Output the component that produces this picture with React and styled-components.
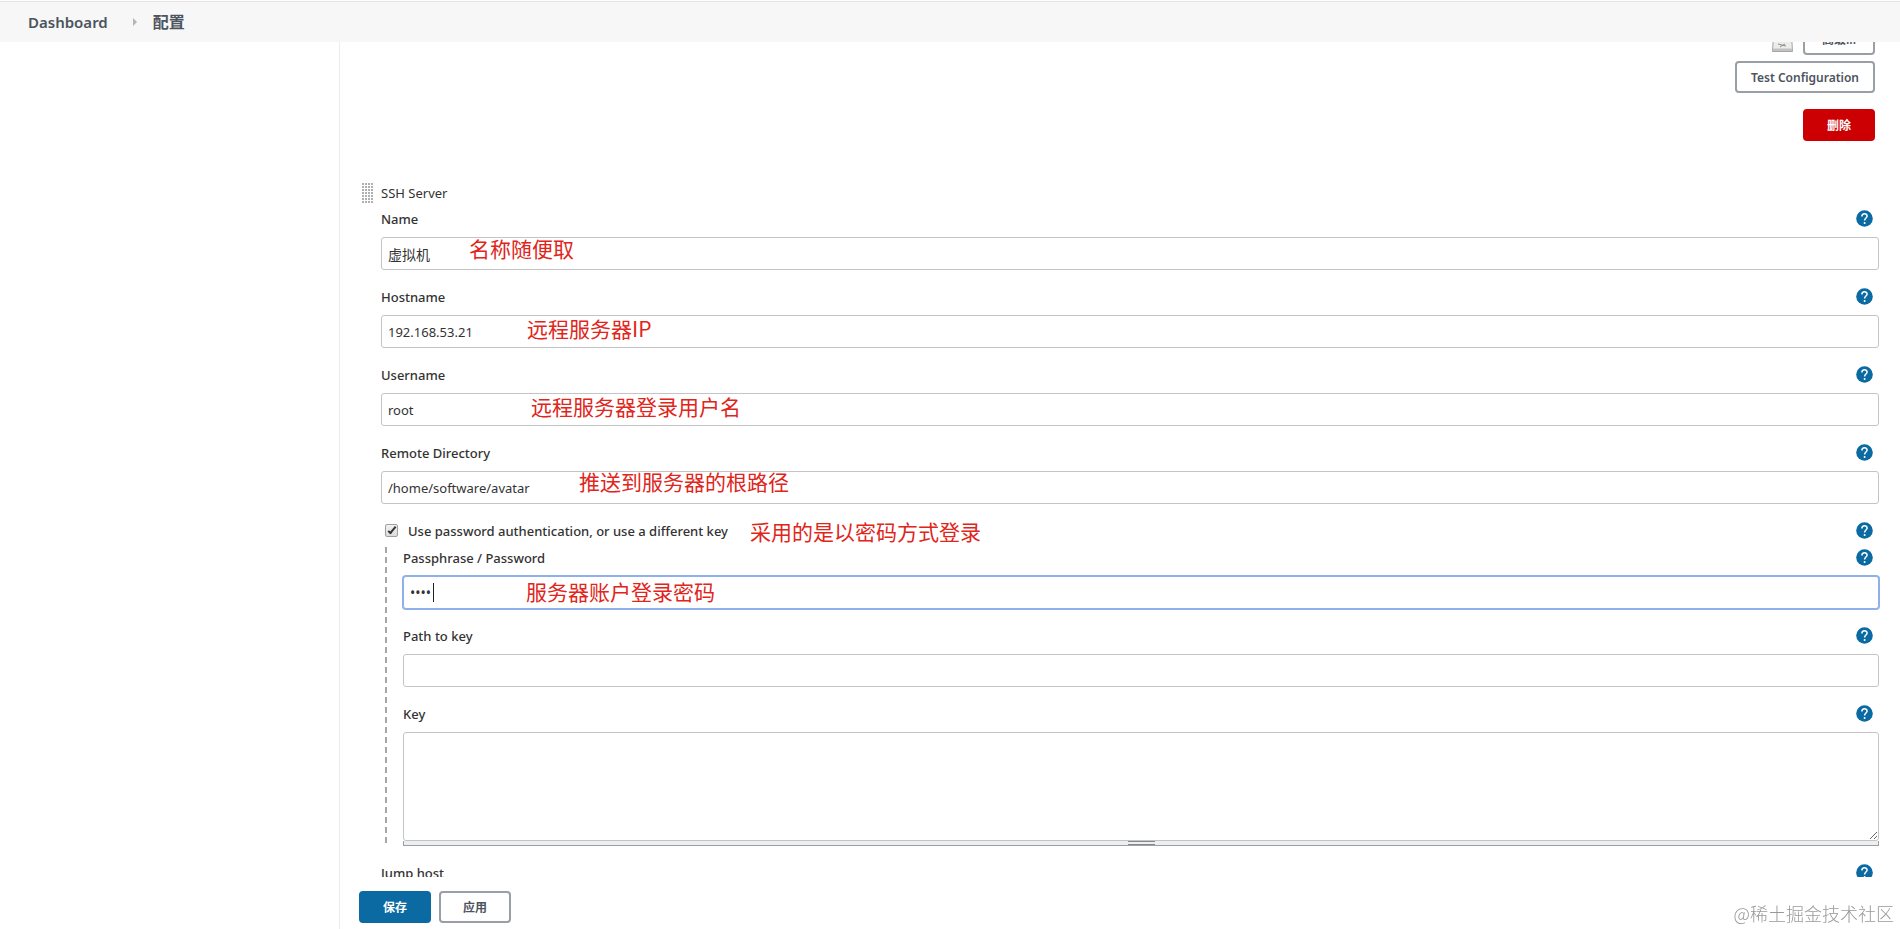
import React from "react";
import styled, { createGlobalStyle, css } from "styled-components";

const GlobalStyle = createGlobalStyle`
  *, *::before, *::after { box-sizing: border-box; }
  body {
    margin: 0;
    background: #fff;
    color: #333;
    font-family: "Noto Sans", "Noto Sans CJK SC", sans-serif;
    font-size: 13px;
    overflow: hidden;
  }
  button, input, textarea { font-family: inherit; font-size: inherit; color: inherit; }
`;

const Page = styled.div`
  display: flex;
  flex-direction: column;
  height: 100vh;
`;

const Breadcrumbs = styled.nav`
  position: relative;
  z-index: 1;
  flex: none;
  display: flex;
  align-items: center;
  gap: 16px;
  height: 42px;
  padding: 2px 28px 0;
  background: #f7f7f7;
  box-shadow: inset 0 1px #fdfdfd, inset 0 2px #e6e6e6;
  font-weight: 600;
`;

const Crumb = styled.a`
  color: #4d545d;
  font-size: ${(p) => (p.$current ? 16 : 15)}px;
  line-height: 20px;
  text-decoration: none;
`;

const CrumbArrow = styled.span`
  margin: 0 0 0 9px;
  border: solid transparent;
  border-width: 4px 0 4px 4px;
  border-left-color: #b5b5b5;
`;

const Body = styled.div`
  display: flex;
  flex: 1;
  min-height: 0;
`;

const SidePanel = styled.aside`
  flex: none;
  width: 340px;
  border-right: 1px solid #ececec;
`;

const Main = styled.main`
  flex: 1;
  min-width: 0;
  display: flex;
  flex-direction: column;
`;

const ScrollPane = styled.div`
  flex: 1;
  min-height: 0;
  overflow: hidden;
`;

const Form = styled.form`
  margin-top: -19px;
  padding: 0 21px 0 41px;
`;

const ActionStack = styled.div`
  display: flex;
  flex-direction: column;
  align-items: flex-end;
  padding-right: 4px;
  margin-bottom: 40px;
`;

const ActionRow = styled.div`
  display: flex;
  align-items: center;
  gap: 10px;
  margin-bottom: ${(p) => p.$gap || 0}px;
`;

const variants = {
  plain: css`background: #fff; border-color: #9a9fa6; color: #4d545d;`,
  primary: css`background: #0b6aa2; border-color: #0b6aa2; color: #fff;`,
  danger: css`background: #cc0003; border-color: #cc0003; color: #fff;`,
};

const Button = styled.button`
  height: 32px;
  min-width: 72px;
  padding: 2px 14px 0;
  border: 2px solid;
  border-radius: 4px;
  font-size: 12px;
  font-weight: 600;
  line-height: 16px;
  ${(p) => variants[p.$variant || "plain"]}
`;

const SectionHead = styled.div`
  display: flex;
  align-items: center;
  gap: 8px;
  height: 24px;
  margin: 0 0 2px -19px;
`;

const DragHandle = styled.span`
  width: 11px;
  height: 20px;
  background: radial-gradient(circle at 1px 1px, #b0b0b0 1px, transparent 1px) 0 0 / 3px 3px;
`;

const FieldBox = styled.div`
  position: relative;
  margin-bottom: 15px;
`;

const LabelRow = styled.div`
  position: relative;
  display: flex;
  align-items: center;
  justify-content: space-between;
  height: 24px;
  padding-right: 6px;
  margin-bottom: ${(p) => p.$gap ?? 6}px;
`;

const Label = styled.label`
  display: flex;
  align-items: center;
  gap: 10px;
  font-size: 13px;
  font-weight: 500;
  line-height: 20px;
`;

const HelpLink = styled.a`
  display: block;
  width: 17px;
  height: 17px;
  margin-bottom: 2px;
  svg { display: block; }
`;

const Input = styled.input`
  display: block;
  width: 100%;
  height: 33px;
  padding: 0 6px;
  border: 1px solid #c4c4c4;
  border-radius: 3px;
  background: #fff;
  outline: none;
  font-size: ${(p) => (p.$large ? 14 : 13)}px;
  ${(p) => p.$active && css`border-color: #8fb0ea; box-shadow: 0 0 0 1px #8fb0ea;`}
`;

const Caret = styled.span`
  position: absolute;
  left: 30px;
  bottom: 7px;
  width: 1px;
  height: 19px;
  background: #222;
`;

const KeyArea = styled.textarea`
  display: block;
  width: 100%;
  height: 109px;
  padding: 6px;
  border: 1px solid #c4c4c4;
  border-radius: 3px;
  resize: vertical;
  outline: none;
`;

const ResizeBar = styled.div`
  display: flex;
  justify-content: center;
  height: 5px;
  background: #eceeef;
  border: 1px solid #9a9fa6;
  border-top: 0;
  &::after {
    content: "";
    width: 27px;
    height: 4px;
    border: solid #888;
    border-width: 1px 0;
  }
`;

const Checkbox = styled.input`
  appearance: none;
  position: relative;
  width: 13px;
  height: 13px;
  margin: 0 0 2px 4px;
  border: 1px solid #a0a0a0;
  border-radius: 2px;
  background: linear-gradient(#f2f2f2, #dcdcdc);
  &:checked::after {
    content: "";
    position: absolute;
    left: 4px;
    top: 0;
    width: 4px;
    height: 9px;
    border: solid #333;
    border-width: 0 2px 2px 0;
    transform: rotate(40deg);
  }
`;

const Nested = styled.fieldset`
  min-width: 0;
  margin: 0 0 15px 4px;
  padding: 0 0 0 18px;
  border: 0;
  background: repeating-linear-gradient(#a6a6a6 0 6px, transparent 6px 10px) 0 1px / 2px 100% no-repeat;
`;

const Note = styled.span`
  position: absolute;
  left: ${(p) => p.$x}px;
  top: ${(p) => p.$y}px;
  color: #e0251b;
  font-family: "Noto Sans CJK SC", sans-serif;
  font-size: 21px;
  font-weight: 400;
  line-height: 24px;
  white-space: nowrap;
  pointer-events: none;
`;

const SaveBar = styled.div`
  flex: none;
  display: flex;
  gap: 8px;
  padding: 14px 19px 6px;
`;

const Watermark = styled.span`
  position: fixed;
  right: 6px;
  bottom: 4px;
  color: #999;
  font-family: "Noto Sans CJK SC", sans-serif;
  font-size: 18px;
  font-weight: 300;
  line-height: 24px;
`;

function Help({ topic }) {
  return (
    <HelpLink href="#help" aria-label={`Help: ${topic}`}>
      <svg width="17" height="17" viewBox="0 0 17 17">
        <circle cx="8.5" cy="8.5" r="8.3" fill="#0b6aa2" />
        <path d="M5.9 6.5C5.9 2.9 11.1 2.9 11.1 6.1C11.1 8.1 8.6 8 8.6 10.4" fill="none" stroke="#fff" strokeWidth="1.5" />
        <circle cx="8.6" cy="13" r="1" fill="#fff" />
      </svg>
    </HelpLink>
  );
}

function NotepadIcon() {
  return (
    <svg width="21" height="26" viewBox="0 0 21 26" aria-hidden="true">
      <path d="M2 0H19L20.5 25.5H0.5Z" fill="#ececec" stroke="#a5a5a5" />
      <path d="M1 22.5H20V25H1Z" fill="#c2c2c2" />
      <path d="M6 18L14 20M8 21L13 18" stroke="#8a8f80" />
    </svg>
  );
}

function Field({ id, label, note, children }) {
  return (
    <FieldBox>
      <LabelRow>
        <Label htmlFor={id}>{label}</Label>
        <Help topic={label} />
      </LabelRow>
      {children}
      {note && <Note $x={note.x} $y={note.y}>{note.text}</Note>}
    </FieldBox>
  );
}

const fields = [
  { id: "name", label: "Name", value: "虚拟机", large: true, note: { x: 88, y: 29, text: "名称随便取" } },
  { id: "hostname", label: "Hostname", value: "192.168.53.21", note: { x: 146, y: 31, text: "远程服务器IP" } },
  { id: "username", label: "Username", value: "root", note: { x: 150, y: 31, text: "远程服务器登录用户名" } },
  { id: "remote", label: "Remote Directory", value: "/home/software/avatar", note: { x: 198, y: 28, text: "推送到服务器的根路径" } },
];

export default function App() {
  return (
    <Page>
      <GlobalStyle />
      <Breadcrumbs>
        <Crumb href="#dashboard">Dashboard</Crumb>
        <CrumbArrow />
        <Crumb href="#configure" $current>配置</Crumb>
      </Breadcrumbs>
      <Body>
        <SidePanel />
        <Main>
          <ScrollPane>
            <Form id="config" onSubmit={(e) => e.preventDefault()}>
              <ActionStack>
                <ActionRow $gap={6}>
                  <NotepadIcon />
                  <Button type="button">高级...</Button>
                </ActionRow>
                <ActionRow $gap={16}>
                  <Button type="button">Test Configuration</Button>
                </ActionRow>
                <ActionRow>
                  <Button type="button" $variant="danger">删除</Button>
                </ActionRow>
              </ActionStack>

              <SectionHead>
                <DragHandle />
                SSH Server
              </SectionHead>

              {fields.map((f) => (
                <Field key={f.id} id={f.id} label={f.label} note={f.note}>
                  <Input id={f.id} type="text" defaultValue={f.value} $large={f.large} />
                </Field>
              ))}

              <LabelRow $gap={3}>
                <Label>
                  <Checkbox type="checkbox" defaultChecked />
                  Use password authentication, or use a different key
                </Label>
                <Help topic="Use password authentication" />
                <Note $x={369} $y={0}>采用的是以密码方式登录</Note>
              </LabelRow>

              <Nested>
                <Field id="password" label="Passphrase / Password" note={{ x: 123, y: 33, text: "服务器账户登录密码" }}>
                  <Input id="password" type="password" defaultValue="root" $active $large />
                  <Caret />
                </Field>
                <Field id="keypath" label="Path to key">
                  <Input id="keypath" type="text" />
                </Field>
                <LabelRow>
                  <Label htmlFor="key">Key</Label>
                  <Help topic="Key" />
                </LabelRow>
                <KeyArea id="key" />
                <ResizeBar />
              </Nested>

              <Field id="jump" label="Jump host">
                <Input id="jump" type="text" />
              </Field>
            </Form>
          </ScrollPane>
          <SaveBar>
            <Button type="submit" form="config" $variant="primary">保存</Button>
            <Button type="button">应用</Button>
          </SaveBar>
        </Main>
      </Body>
      <Watermark>@稀土掘金技术社区</Watermark>
    </Page>
  );
}
